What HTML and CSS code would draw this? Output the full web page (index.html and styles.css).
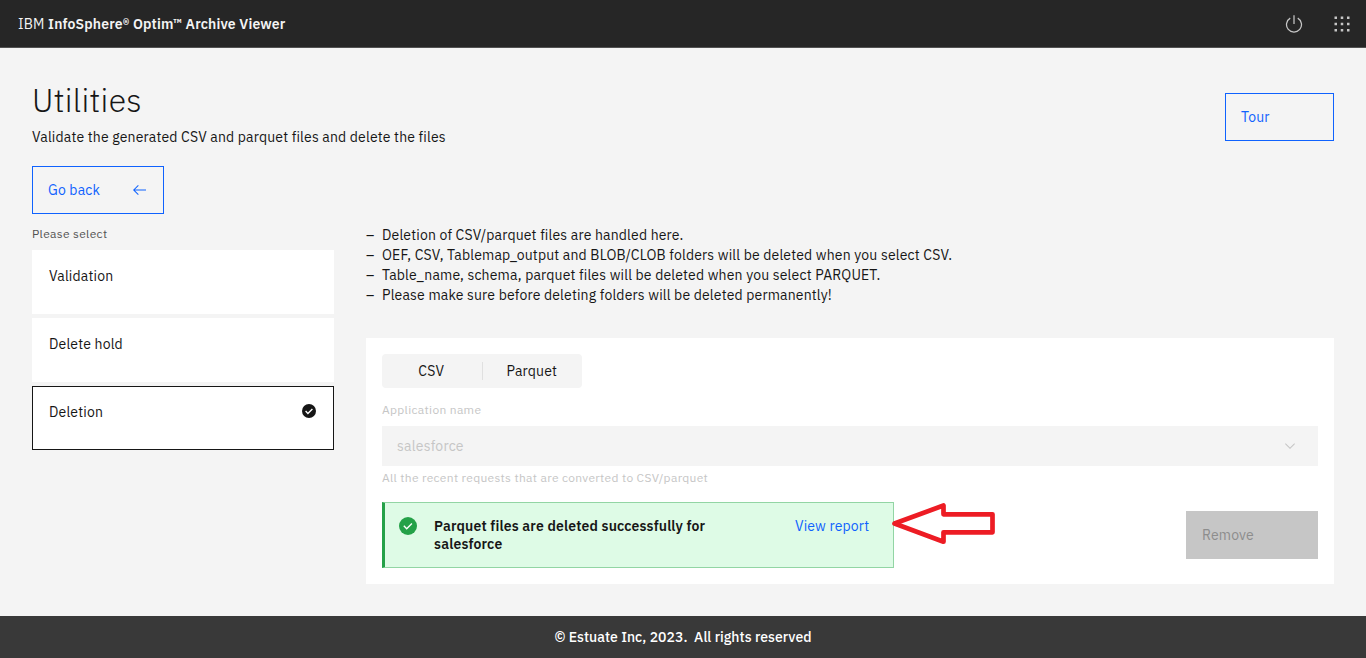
FILE: index.html
```
<!DOCTYPE html>
<html lang="en">
<head>
<meta charset="utf-8">
<title>Archive Viewer - Utilities</title>
<link rel="stylesheet" href="styles.css">
</head>
<body>
<header class="topbar">
  <div class="brand"><span class="brand-prefix">IBM</span> InfoSphere® Optim™ Archive Viewer</div>
  <div class="topbar-actions">
    <svg class="icon-20" viewBox="0 0 32 32"><path d="M22.5 5.74l-1 1.73a11 11 0 1 1-11 0l-1-1.73a13 13 0 1 0 13 0z"/><path d="M15 2h2v14h-2z"/></svg>
    <svg class="icon-20" viewBox="0 0 32 32"><path d="M14 4h4v4h-4zM4 4h4v4H4zM24 4h4v4h-4zM14 14h4v4h-4zM4 14h4v4H4zM24 14h4v4h-4zM14 24h4v4h-4zM4 24h4v4H4zM24 24h4v4h-4z"/></svg>
  </div>
</header>
<main class="page">
  <div class="page-head">
    <div>
      <h1 class="title">Utilities</h1>
      <p class="subtitle">Validate the generated CSV and parquet files and delete the files</p>
    </div>
    <button class="btn btn-outline btn-tour">Tour</button>
  </div>
  <button class="btn btn-outline btn-back">Go back
    <svg class="icon-16" viewBox="0 0 32 32"><path d="M14 26l1.41-1.41L7.83 17H30v-2H7.83l7.58-7.59L14 6 4 16z"/></svg>
  </button>
  <div class="columns">
    <aside class="side">
      <p class="label">Please select</p>
      <div class="tiles">
        <div class="tile">Validation</div>
        <div class="tile">Delete hold</div>
        <div class="tile tile-selected">Deletion
          <svg class="icon-16" viewBox="0 0 16 16"><circle cx="8" cy="8" r="7"/><path class="tick" d="M4.6 8.1l2.3 2.3 4.5-4.5"/></svg>
        </div>
      </div>
    </aside>
    <section class="content">
      <ul class="notes">
        <li>Deletion of CSV/parquet files are handled here.</li>
        <li>OEF, CSV, Tablemap_output and BLOB/CLOB folders will be deleted when you select CSV.</li>
        <li>Table_name, schema, parquet files will be deleted when you select PARQUET.</li>
        <li>Please make sure before deleting folders will be deleted permanently!</li>
      </ul>
      <div class="card">
        <div class="switcher">
          <div class="switch">CSV</div>
          <div class="switch">Parquet</div>
        </div>
        <p class="field-label">Application name</p>
        <div class="dropdown">salesforce
          <svg class="icon-16" viewBox="0 0 16 16"><path d="M8 11L3 6l.7-.7L8 9.6l4.3-4.3.7.7z"/></svg>
        </div>
        <p class="helper">All the recent requests that are converted to CSV/parquet</p>
        <div class="result-row">
          <div class="notice">
            <svg class="icon-20" viewBox="0 0 20 20"><circle cx="10" cy="10" r="9"/><path class="tick" d="M5.8 9.8l2.9 2.9 5.2-5.2"/></svg>
            <div class="notice-text">Parquet files are deleted successfully for<br>salesforce</div>
            <a class="link">View report</a>
            <svg class="pointer" viewBox="0 0 106 44"><path d="M2.500 21.500L51.500 3.500V12.300H100.500V30.300H51.500V39.700z"/></svg>
          </div>
          <button class="btn btn-disabled">Remove</button>
        </div>
      </div>
    </section>
  </div>
</main>
<footer class="footer">© Estuate Inc, 2023.&nbsp; All rights reserved</footer>
</body>
</html>
```
FILE: styles.css
```
* { box-sizing: border-box; }
body { margin: 0; min-height: 658px; display: flex; flex-direction: column; background: #f4f4f4; color: #161616; font: 14px/20px "IBM Plex Sans", Roboto, "Noto Sans", sans-serif; letter-spacing: 0.16px; }
h1, p, ul { margin: 0; padding: 0; font-weight: 400; }
.icon-16 { width: 16px; height: 16px; fill: currentColor; flex: none; }
.icon-20 { width: 20px; height: 20px; fill: currentColor; flex: none; }
.tick { fill: none; stroke: #fff; stroke-width: 1.4; }
.topbar { height: 48px; display: flex; align-items: center; justify-content: space-between; padding: 0 14px 0 18px; background: #262626; border-bottom: 1px solid #525252; color: #f4f4f4; }
.brand { font-weight: 600; padding-top: 1px; }
.brand-prefix { font-weight: 400; }
.topbar-actions { display: flex; gap: 28px; color: #c6c6c6; }
.page { flex: 1; padding: 32px 32px 0; }
.page-head { display: flex; justify-content: space-between; }
.title { font-size: 32px; line-height: 40px; font-weight: 300; letter-spacing: 0.3px; }
.subtitle { margin-top: 7px; }
.btn { display: flex; justify-content: space-between; align-items: center; height: 48px; padding: 0 16px 0 15px; border: 1px solid; background: transparent; font: inherit; letter-spacing: inherit; flex: none; }
.btn-outline { color: #0f62fe; border-color: #0f62fe; }
.btn-tour { width: 109px; margin-top: 13px; }
.btn-back { width: 132px; margin-top: 19px; }
.btn-disabled { width: 132px; background: #c6c6c6; border-color: #c6c6c6; color: #8d8d8d; }
.columns { display: grid; grid-template-columns: 302px 968px; gap: 32px; margin-top: 12px; }
.label { font-size: 12px; line-height: 16px; letter-spacing: 0.32px; color: #525252; }
.tiles { display: flex; flex-direction: column; gap: 4px; margin-top: 8px; }
.tile { display: flex; justify-content: space-between; height: 64px; padding: 15px 16px; background: #fff; border: 1px solid #fff; }
.tile-selected { border-color: #161616; }
.tile .icon-16 { margin-top: 1px; }
.notes { list-style: none; margin-top: -1px; }
.notes li { display: flex; }
.notes li::before { content: "–"; width: 16px; }
.card { margin-top: 33px; height: 246px; padding: 16px; background: #fff; }
.switcher { display: flex; width: 200px; height: 34px; border-radius: 4px; background: #f4f4f4; }
.switch { flex: 1; display: flex; align-items: center; justify-content: center; padding-right: 2px; }
.switch + .switch { padding-right: 1px; }
.switch + .switch::before { content: ""; width: 1px; height: 18px; margin-left: -1px; margin-right: auto; background: #e0e0e0; }
.switch + .switch::after { content: ""; margin-left: auto; }
.field-label, .helper { font-size: 12px; line-height: 16px; letter-spacing: 0.32px; color: #c6c6c6; }
.field-label { margin-top: 14px; }
.dropdown { display: flex; align-items: center; justify-content: space-between; height: 40px; margin-top: 8px; padding: 0 20px 0 15px; background: #f4f4f4; color: #c6c6c6; letter-spacing: 0.22px; }
.helper { margin-top: 4px; }
.result-row { display: flex; align-items: center; justify-content: space-between; margin-top: 16px; }
.notice { position: relative; display: flex; width: 512px; height: 66px; padding: 13px 23px 0 13px; background: #defbe6; border: 1px solid #92d5a4; border-left: 3px solid #24a148; }
.notice .icon-20 { color: #24a148; }
.notice-text { width: 361px; margin-left: 16px; padding-top: 1px; line-height: 18px; font-weight: 600; }
.link { color: #0f62fe; }
.pointer { position: absolute; left: 507px; top: -1px; width: 106px; height: 44px; fill: none; stroke: #ed1c24; stroke-width: 4.7; stroke-linejoin: round; }
.footer { height: 42px; display: flex; align-items: center; justify-content: center; background: #393939; color: #fff; font-weight: 500; letter-spacing: 0.03px; }
```
